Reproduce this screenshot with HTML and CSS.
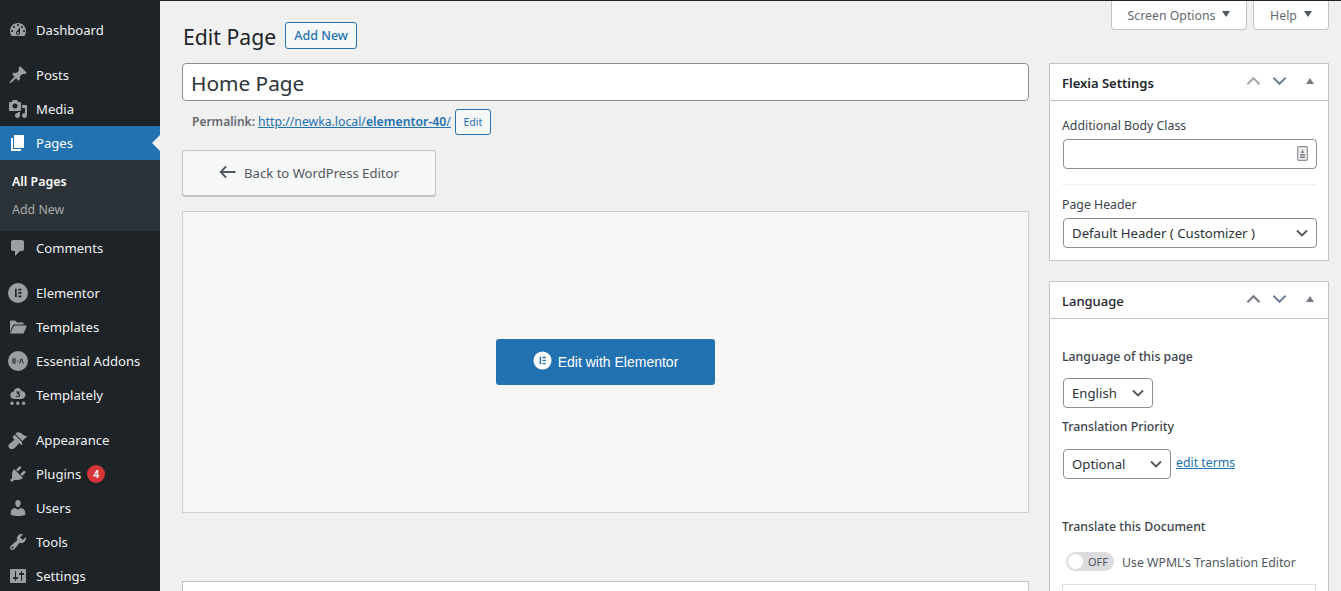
FILE: index.html
```html
<!DOCTYPE html>
<html lang="en">
<head>
<meta charset="utf-8">
<title>Edit Page</title>
<link rel="stylesheet" href="styles.css">
</head>
<body>
<div class="shell">
<nav class="sidebar">
  <ul class="menu">
    <li class="item"><svg class="ic" viewBox="0 0 20 20"><path d="M3.76 16h12.48c1.1-1.37 1.76-3.11 1.76-5 0-4.42-3.58-8-8-8s-8 3.58-8 8c0 1.89.66 3.63 1.76 5zM10 4c.55 0 1 .45 1 1s-.45 1-1 1-1-.45-1-1 .45-1 1-1zM6 6c.55 0 1 .45 1 1s-.45 1-1 1-1-.45-1-1 .45-1 1-1zm8 0c.55 0 1 .45 1 1s-.45 1-1 1-1-.45-1-1 .45-1 1-1zm-5.37 5.55L12 7v6c0 1.1-.9 2-2 2s-2-.9-2-2c0-.57.24-1.08.63-1.45zM4 10c.55 0 1 .45 1 1s-.45 1-1 1-1-.45-1-1 .45-1 1-1zm12 0c.55 0 1 .45 1 1s-.45 1-1 1-1-.45-1-1 .45-1 1-1zm-5 3c0-.55-.45-1-1-1s-1 .45-1 1 .45 1 1 1 1-.45 1-1z"/></svg>Dashboard</li>
    <li class="item sep"><svg class="ic" viewBox="0 0 20 20"><path d="M10.44 3.02l1.82-1.82 6.36 6.35-1.83 1.82c-1.05-.68-2.48-.57-3.41.36l-.75.75c-.92.93-1.04 2.35-.35 3.41l-1.83 1.82-2.41-2.41-2.8 2.79c-.42.42-3.38 2.71-3.8 2.29s1.86-3.39 2.28-3.81l2.79-2.79L4.1 9.36l1.83-1.82c1.05.69 2.48.57 3.4-.36l.75-.75c.93-.92 1.05-2.35.36-3.41z"/></svg>Posts</li>
    <li class="item"><svg class="ic" viewBox="0 0 20 20"><path d="M13 11V4c0-.55-.45-1-1-1h-1.67L9 1H5L3.67 3H2c-.55 0-1 .45-1 1v7c0 .55.45 1 1 1h10c.55 0 1-.45 1-1zM7 4.5c1.38 0 2.5 1.12 2.5 2.5S8.38 9.5 7 9.5 4.5 8.38 4.5 7 5.62 4.5 7 4.5zM14 6h5v10.5c0 1.38-1.12 2.5-2.5 2.5S14 17.88 14 16.5s1.12-2.5 2.5-2.5c.17 0 .34.02.5.05V9h-3V6zm-4 8.05V13h2v3.5c0 1.38-1.12 2.5-2.5 2.5S7 17.88 7 16.5 8.12 14 9.5 14c.17 0 .34.02.5.05z"/></svg>Media</li>
    <li class="item current"><svg class="ic" viewBox="0 0 20 20"><path d="M6 15V2h10v13H6zm-1 1h8v2H3V5h2v11z"/></svg>Pages</li>
    <li class="submenu">
      <a class="sub on">All Pages</a>
      <a class="sub">Add New</a>
    </li>
    <li class="item"><svg class="ic" viewBox="0 0 20 20"><path d="M5 2h9c1.1 0 2 .9 2 2v7c0 1.1-.9 2-2 2h-2l-5 5v-5H5c-1.1 0-2-.9-2-2V4c0-1.1.9-2 2-2z"/></svg>Comments</li>
    <li class="item sep"><svg class="ic" viewBox="0 0 20 20"><path fill-rule="evenodd" d="M10 0a10 10 0 1 0 0 20 10 10 0 0 0 0-20zM7 5.800h1.700v8.400H7zm3.300 0h3.200v1.700h-3.200zm0 3.300h3.200v1.700h-3.200zm0 3.400h3.200v1.700h-3.200z"/></svg>Elementor</li>
    <li class="item"><svg class="ic" viewBox="0 0 20 20"><path d="M2 3.500h5l2 2h6.500v2H5.500L2 14.500v-11zm4.300 5H19l-3.500 8H1.900z"/></svg>Templates</li>
    <li class="item"><svg class="ic" viewBox="0 0 20 20"><path fill-rule="evenodd" d="M10 0a10 10 0 1 0 0 20 10 10 0 0 0 0-20zM4.500 7.500h3.500v.9H5.500v1.100H8v.9H5.500v1.200H8v.9H4.500zM9.300 9.500h1.200v.9H9.300zM13 7.400h.9l2 5.100h-1l-1.450-3.800-1.450 3.800h-1z"/></svg>Essential Addons</li>
    <li class="item"><svg class="ic" viewBox="0 0 20 20"><path fill-rule="evenodd" d="M9.800 3c1.900 0 3.300 1.200 3.700 2.900 2.100.1 4 1.500 4 3.800 0 2.500-2.100 4.300-4.500 4.300H6.300C4 14 2.300 12.500 2.300 10.300c0-2 1.400-3.400 3.400-3.700C6.300 4.400 7.800 3 9.800 3zM8 6.400v1h2.100L8.900 8.700l.7.7c.9 0 1.400.3 1.400.9s-.5 1-1.200 1c-.6 0-1.100-.2-1.500-.6l-.6.8c.5.5 1.200.8 2.100.8 1.400 0 2.300-.8 2.300-2 0-1-.7-1.600-1.500-1.700l1.300-1.400v-.8z"/><circle cx="4" cy="18.300" r="1.700"/><circle cx="9.800" cy="18.300" r="1.700"/><circle cx="15.600" cy="18.300" r="1.700"/></svg>Templately</li>
    <li class="item sep"><svg class="ic" viewBox="0 0 20 20"><path d="M14.480 11.060L7.410 3.990l1.500-1.500c.5-.56 2.300-.47 3.510.32 1.210.8 1.430 1.280 2.910 2.100 1.180.64 2.450 1.260 4.450.85zm-.71.71L6.700 4.700 4.930 6.470c-.39.39-.39 1.020 0 1.410l1.060 1.060c.39.39.39 1.030 0 1.420-.6.6-1.430 1.110-2.210 1.690-.35.26-.7.53-1.010.84C1.430 13.230.4 14.910.4 16.190c0 1.280 2.010 3.060 3.300 3.060 1.270 0 2.950-1.030 4.290-2.380.31-.31.58-.66.84-1.010.58-.78 1.090-1.610 1.690-2.210.39-.39 1.030-.39 1.420 0l1.060 1.060c.39.39 1.020.39 1.410 0z"/></svg>Appearance</li>
    <li class="item"><svg class="ic" viewBox="0 0 20 20"><path d="M13.110 4.360L9.870 7.600 8 5.730l3.240-3.240c.35-.34 1.050-.2 1.560.32.52.51.66 1.210.31 1.550zm-8 1.770l.91-1.120 9.010 9.010-1.190.84c-.71.71-2.630 1.160-3.820 1.160H6.140L4.900 17.260c-.59.59-1.540.59-2.120 0-.59-.58-.59-1.530 0-2.120l1.240-1.240v-3.880c0-1.130.4-3.190 1.090-3.890zm7.260 3.970l3.240-3.240c.34-.35 1.040-.21 1.550.31.52.51.66 1.210.31 1.550l-3.240 3.250z"/></svg>Plugins<span class="badge">4</span></li>
    <li class="item"><svg class="ic" viewBox="0 0 20 20"><path d="M10 9.250c-2.270 0-2.730-3.440-2.730-3.440C7 4.020 7.820 2 9.970 2c2.160 0 2.980 2.020 2.710 3.810 0 0-.41 3.440-2.680 3.440zm0 2.570L12.720 10c2.390 0 4.520 2.330 4.520 4.530v2.490s-3.650 1.130-7.240 1.130c-3.650 0-7.240-1.130-7.240-1.130v-2.490c0-2.250 1.940-4.480 4.470-4.480z"/></svg>Users</li>
    <li class="item"><svg class="ic" viewBox="0 0 20 20"><path d="M16.680 9.770c-1.340 1.340-3.300 1.670-4.950.99l-5.410 6.520c-.99.99-2.590.99-3.580 0s-.99-2.590 0-3.570l6.520-5.420c-.68-1.650-.35-3.610.99-4.950 1.280-1.280 3.120-1.620 4.720-1.060l-2.890 2.890 2.820 2.820 2.860-2.870c.53 1.580.18 3.390-1.080 4.650zM3.810 16.210c.4.39 1.040.39 1.430 0 .4-.4.4-1.040 0-1.430-.39-.4-1.030-.4-1.430 0-.39.39-.39 1.030 0 1.430z"/></svg>Tools</li>
    <li class="item"><svg class="ic" viewBox="0 0 20 20"><path d="M18 16V4c0-.55-.45-1-1-1H3c-.55 0-1 .45-1 1v12c0 .55.45 1 1 1h14c.55 0 1-.45 1-1zM8 11h1c.55 0 1 .45 1 1s-.45 1-1 1H8v1.500c0 .28-.22.5-.5.5s-.5-.22-.5-.5V13H6c-.55 0-1-.45-1-1s.45-1 1-1h1V5.500c0-.28.22-.5.5-.5s.5.22.5.5V11zm5-2h-1c-.55 0-1-.45-1-1s.45-1 1-1h1V5.500c0-.28.22-.5.5-.5s.5.22.5.5V7h1c.55 0 1 .45 1 1s-.45 1-1 1h-1v5.500c0 .28-.22.5-.5.5s-.5-.22-.5-.5V9z"/></svg>Settings</li>
  </ul>
</nav>
<main class="main">
  <div class="tabs">
    <button class="tab tab-screen">Screen Options<span class="caret"></span></button>
    <button class="tab tab-help">Help<span class="caret"></span></button>
  </div>
  <div class="columns">
    <section class="content">
      <div class="heading">
        <h1 class="title">Edit Page</h1>
        <a class="add-new">Add New</a>
      </div>
      <input class="title-input" type="text" value="Home Page">
      <div class="permalink">
        <strong class="plabel">Permalink:</strong>
        <a class="plink">http://newka.local/<b>elementor-40</b>/</a>
        <a class="pedit">Edit</a>
      </div>
      <button class="back"><svg class="back-arrow" viewBox="0 0 18 14"><path d="M7.500 1L1.800 7l5.700 6M2 7h15.500" fill="none" stroke="#50575e" stroke-width="2"/></svg>Back to WordPress Editor</button>
      <div class="el-panel">
        <button class="el-btn"><svg class="el-ic" viewBox="0 0 20 20"><path fill="#fff" fill-rule="evenodd" d="M10 .5a9.500 9.500 0 1 0 0 19 9.500 9.500 0 0 0 0-19zM7 6h1.500v8H7zm3 0h3.500v1.500H10zm0 3.250h3.500v1.500H10zm0 3.250h3.500V14H10z"/></svg>Edit with Elementor</button>
      </div>
      <div class="next-box"></div>
    </section>
    <aside class="side">
      <section class="box box-flexia">
        <header class="box-head">
          <h2 class="box-title strong">Flexia Settings</h2>
          <svg class="ctrl" viewBox="0 0 16 10"><path d="M1.500 8.500L8 2l6.500 6.500" fill="none" stroke="#a8a9a6" stroke-width="2.200"/></svg>
          <svg class="ctrl" viewBox="0 0 16 10"><path d="M1.500 1.500L8 8l6.500-6.500" fill="none" stroke="#6f8294" stroke-width="2.200"/></svg>
          <span class="tri"></span>
        </header>
        <div class="box-body">
          <label class="lbl">Additional Body Class</label>
          <div class="input-wrap">
            <input class="field" type="text">
            <svg class="pass-ic" viewBox="0 0 11 15"><rect x=".7" y=".7" width="9.600" height="13.600" rx="1" fill="#eee" stroke="#8c8f94" stroke-width="1.200"/><path d="M3 12h5v-1.500H3zM3 9.500h5V8H3zM5.500 3L4 7h3z" fill="#787c82"/></svg>
          </div>
          <hr class="rule">
          <label class="lbl lbl2">Page Header</label>
          <select class="field select"><option>Default Header ( Customizer )</option></select>
        </div>
      </section>
      <section class="box box-lang">
        <header class="box-head">
          <h2 class="box-title">Language</h2>
          <svg class="ctrl" viewBox="0 0 16 10"><path d="M1.500 8.500L8 2l6.500 6.500" fill="none" stroke="#787c82" stroke-width="2.200"/></svg>
          <svg class="ctrl" viewBox="0 0 16 10"><path d="M1.500 1.500L8 8l6.500-6.500" fill="none" stroke="#6f8294" stroke-width="2.200"/></svg>
          <span class="tri"></span>
        </header>
        <div class="box-body lang-body">
          <p class="med l1">Language of this page</p>
          <select class="field select sel-en"><option>English</option></select>
          <p class="med l2">Translation Priority</p>
          <div class="prio">
            <select class="field select sel-op"><option>Optional</option></select>
            <a class="terms">edit terms</a>
          </div>
          <p class="med l3">Translate this Document</p>
          <div class="toggle-row">
            <span class="toggle"><span class="knob"></span>OFF</span>
            <span class="toggle-label">Use WPML's Translation Editor</span>
          </div>
          <div class="lang-next"></div>
        </div>
      </section>
    </aside>
  </div>
</main>
</div>
</body>
</html>
```
FILE: styles.css
```css
* { box-sizing: border-box; }
html, body { margin: 0; height: 591px; overflow: hidden; }
body { font-family: "Noto Sans", "Open Sans", sans-serif; font-size: 13px; color: #3c434a; background: #f0f0f1; }
.shell { display: flex; height: 591px; overflow: hidden; border-top: 1px solid #1d2327; }
.sidebar { width: 160px; flex: none; background: #1d2327; color: #f0f0f1; }
.menu { list-style: none; margin: 0; padding: 12px 0 0; }
.item { height: 34px; display: flex; align-items: center; padding-left: 8px; font-size: 13.100px; color: #f0f0f1; position: relative; }
.sep { margin-top: 11px; }
.ic { width: 20px; height: 20px; flex: none; margin-right: 8px; fill: #9a9fa4; }
.current { background: #2271b1; color: #fff; }
.current .ic { fill: #fff; }
.current::after { content: ""; position: absolute; right: 0; top: 9px; border: 8px solid transparent; border-right-color: #f0f0f1; border-left-width: 0; }
.submenu { height: 71px; background: #2c3338; padding-top: 8px; display: flex; flex-direction: column; }
.sub { height: 28px; line-height: 28px; padding-left: 12px; font-size: 12.400px; color: #a7aaad; }
.sub.on { color: #fff; font-weight: 600; }
.badge { width: 18px; height: 18px; border-radius: 50%; background: #d63638; color: #fff; font-size: 10.500px; font-weight: 600; display: inline-flex; align-items: center; justify-content: center; margin-left: 6px; }
.main { flex: 1; min-width: 0; padding: 0 12px 0 22px; position: relative; }
.tabs { display: flex; justify-content: flex-end; gap: 6px; height: 29px; }
.tab { height: 30px; margin-top: -1px; border: 1px solid #c3c4c7; border-top: 0; border-radius: 0 0 4px 4px; background: #fff; color: #646970; font: inherit; font-size: 12.300px; padding: 2px 0 0; display: flex; align-items: center; justify-content: center; }
.tab-screen { width: 136px; }
.tab-help { width: 76px; }
.caret { width: 0; height: 0; border: 4.500px solid transparent; border-top: 6px solid #50575e; border-bottom: 0; margin-left: 7px; margin-top: -3px; }
.columns { display: flex; gap: 20px; align-items: flex-start; }
.content { width: 847px; flex: none; }
.side { width: 280px; flex: none; padding-top: 33px; }
.heading { display: flex; align-items: center; height: 33px; margin-top: -11px; padding-left: 1px; }
.title { margin: 1px 0 0; font-size: 21.200px; font-weight: 400; color: #1d2327; line-height: 33px; }
.add-new { margin-left: 9px; height: 27px; width: 72px; border: 1px solid #2271b1; border-radius: 3px; background: #f6f7f7; color: #2271b1; font-size: 12.500px; display: flex; align-items: center; justify-content: center; font-weight: 500; }
.title-input { display: block; width: 847px; height: 38px; margin-top: 11px; border: 1px solid #8c8f94; border-radius: 4px; background: #fff; padding: 2px 8px 0; font: inherit; font-size: 20.800px; color: #2c3338; outline: 0; }
.permalink { display: flex; align-items: center; height: 26px; margin-top: 8px; padding: 0 0 1px 10px; font-size: 12px; color: #646970; }
.plabel { font-weight: 600; }
.plink { margin-left: 3px; color: #2271b1; font-size: 12.250px; text-decoration: underline; }
.plink b { font-weight: 600; }
.pedit { margin-left: 4px; width: 36px; height: 26px; border: 1px solid #2271b1; border-radius: 3px; background: #f6f7f7; color: #2271b1; font-size: 10.500px; display: flex; align-items: center; justify-content: center; }
.back { display: flex; align-items: center; justify-content: center; width: 254px; height: 47px; margin-top: 15px; border: 1px solid #c3c4c7; border-bottom: 2px solid #c3c4c7; border-radius: 3px; background: #f6f7f7; color: #50575e; font: inherit; font-size: 13.100px; padding: 1px 0 1px 2px; }
.back-arrow { width: 17px; height: 14px; margin-right: 8px; margin-top: -3px; margin-left: -2px; }
.el-panel { height: 302px; margin-top: 14px; border: 1px solid #ccd0d4; background: #f6f6f6; display: flex; align-items: center; justify-content: center; }
.el-btn { width: 219px; height: 46px; border: 0; border-radius: 3px; background: #2271b1; color: #fff; font-family: "Liberation Sans", Arial, sans-serif; font-size: 14px; display: flex; align-items: center; justify-content: center; padding: 0; }
.el-ic { width: 19px; height: 19px; margin-right: 6px; margin-top: -3px; }
.next-box { height: 60px; margin-top: 68px; border: 1px solid #c3c4c7; background: #fff; }
.box { border: 1px solid #c3c4c7; background: #fff; }
.box-flexia { height: 198px; }
.box-lang { margin-top: 20px; height: 400px; }
.box-head { display: flex; align-items: center; height: 37px; border-bottom: 1px solid #c3c4c7; padding-left: 12px; }
.box-title { flex: 1; margin: 2px 0 0; font-size: 13px; font-weight: 500; color: #1d2327; }
.box-title.strong { font-weight: 600; }
.ctrl { width: 15px; height: 10px; margin-right: 11px; margin-top: -3px; }
.tri { width: 0; height: 0; border: 4px solid transparent; border-bottom: 6px solid #787c82; border-top: 0; margin: -3px 14px 0 8px; }
.box-body { padding: 16px 11px 0 12px; }
.lbl { display: block; font-size: 12.300px; line-height: 17px; color: #3c434a; }
.input-wrap { position: relative; margin-top: 5px; margin-left: 1px; }
.field { display: block; width: 254px; height: 30px; border: 1px solid #8c8f94; border-radius: 4px; background: #fff; font: inherit; font-size: 13.200px; color: #2c3338; padding: 0 8px; outline: 0; }
.pass-ic { position: absolute; right: 9px; top: 7px; width: 11px; height: 15px; }
.rule { border: 0; border-top: 1px solid #eee; margin: 15px 0 11px 0; width: 254px; }
.lbl2 { margin-bottom: 5px; }
.select { appearance: none; margin-left: 1px; background: #fff url("data:image/svg+xml;utf8,<svg xmlns='http://www.w3.org/2000/svg' width='12' height='8' viewBox='0 0 12 8'><path d='M1 1.500l5 5 5-5' fill='none' stroke='%2350575e' stroke-width='1.800'/></svg>") no-repeat right 8px center; padding-right: 24px; }
.lang-body { padding-top: 29px; position: relative; }
.med { margin: 0; font-size: 12.300px; font-weight: 500; line-height: 17px; color: #3c434a; }
.sel-en { width: 90px; margin-top: 13px; }
.l2 { margin-top: 10px; }
.prio { display: flex; align-items: center; margin-top: 14px; }
.sel-op { width: 108px; }
.terms { margin-left: 5px; margin-top: -4px; font-size: 12.300px; color: #2271b1; text-decoration: underline; }
.l3 { margin-top: 39px; }
.toggle-row { display: flex; align-items: center; margin-top: 17px; padding-left: 4px; height: 19px; }
.toggle { width: 48px; height: 19px; border-radius: 10px; background: #dcdcde; display: flex; align-items: center; font-size: 11px; color: #50575e; padding-left: 2px; }
.knob { width: 15px; height: 15px; border-radius: 50%; background: #fff; margin-right: 5px; }
.toggle-label { margin-left: 8px; font-size: 12.300px; color: #50575e; padding-top: 1px; }
.lang-next { height: 40px; width: 254px; margin-top: 13px; border: 1px solid #dcdcde; }
```
